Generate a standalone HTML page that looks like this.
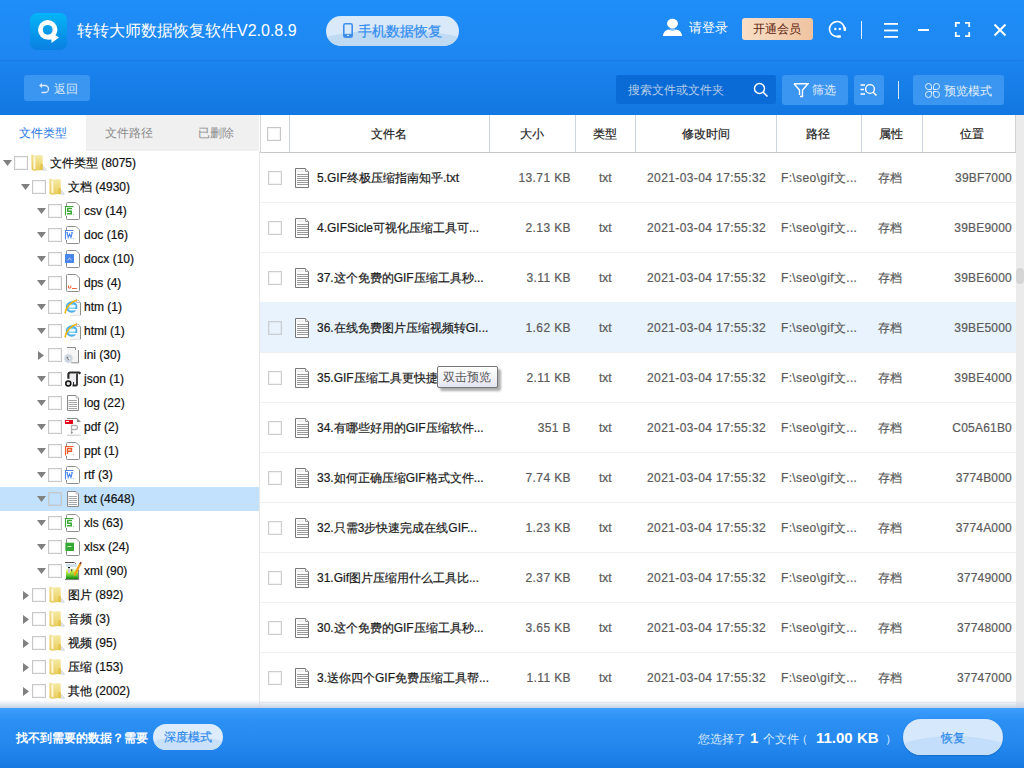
<!DOCTYPE html><html><head><meta charset="utf-8"><style>
*{margin:0;padding:0;box-sizing:border-box}
html,body{width:1024px;height:768px;overflow:hidden;background:#fff;font-family:"Liberation Sans", sans-serif;}
.ab{position:absolute}
.t{position:absolute;white-space:nowrap;line-height:1}
.d{-webkit-text-stroke:0.2px currentColor}
.cb{position:absolute;width:14px;height:14px;border:1px solid #c8c8c8;background:transparent;box-shadow:inset 0 0 1px 1px rgba(0,0,0,0.05)}

</style></head><body>
<div class="ab" style="left:0;top:0;width:1024px;height:60px;background:linear-gradient(#1e8ef9,#1e86f0)"></div>
<div class="ab" style="left:0;top:60px;width:1024px;height:1px;background:#1b7be2"></div>
<div class="ab" style="left:0;top:61px;width:1024px;height:54px;background:linear-gradient(#1c84ef,#1277e0)"></div>
<svg class="ab" style="left:30px;top:13px" width="37" height="37" viewBox="0 0 37 37"><defs><linearGradient id="lg" gradientUnits="userSpaceOnUse" x1="0" y1="0" x2="0" y2="37"><stop offset="0" stop-color="#05b5f6"/><stop offset="1" stop-color="#0a7fe2"/></linearGradient></defs><rect x="0" y="0" width="37" height="37" rx="7" fill="url(#lg)"/><circle cx="17.7" cy="16.8" r="9.7" fill="#fff"/><path d="M17.7 21 L21.3 19.5 L29 24.6 L21.5 30 L21.5 26.5 L17.7 26.5 Z" fill="#fff"/><circle cx="17.7" cy="16.8" r="4.9" fill="url(#lg)"/><path d="M22.5 13.5 A5.5 5.5 0 0 1 22.5 20" fill="none" stroke="#cfd8e0" stroke-width="0.6" opacity="0.6"/></svg>
<div class="t" style="left:77px;top:23px;font-size:16px;color:#fff">转转大师数据恢复软件V2.0.8.9</div>
<div class="ab" style="left:326px;top:16px;width:133px;height:30px;border-radius:15px;background:#d9e9f9;overflow:hidden"><div class="ab" style="left:-25px;top:14px;width:183px;height:44px;border-radius:50%;background:#c1daf4"></div></div>
<svg class="ab" style="left:343px;top:23px" width="10" height="15" viewBox="0 0 10 15"><rect x="0.8" y="0.8" width="8.4" height="13.4" rx="1.5" fill="none" stroke="#3f8fe8" stroke-width="1.6"/><rect x="1" y="11" width="8" height="3" fill="#3f8fe8"/><rect x="4" y="11.8" width="2" height="1.2" fill="#d0e4f8"/></svg>
<div class="t d" style="left:358px;top:24px;font-size:14px;color:#2f8cf0">手机数据恢复</div>
<svg class="ab" style="left:662px;top:18px" width="21" height="19" viewBox="0 0 21 19"><ellipse cx="10.5" cy="5.6" rx="5.5" ry="4.8" fill="#fff"/><rect x="7.8" y="10.6" width="5.4" height="1.1" fill="#fff" opacity=".7"/><path d="M0.8 18 C1.3 14.5 3.5 12.2 6.5 11.6 Q10.5 13.3 14.5 11.6 C17.5 12.2 19.7 14.5 20.2 18 Z" fill="#fff"/></svg>
<div class="t" style="left:689px;top:22px;font-size:12.5px;color:#fff">请登录</div>
<div class="ab" style="left:742px;top:18px;width:71px;height:22px;border-radius:3px;background:linear-gradient(90deg,#f8dfc6,#efc3a0)"></div>
<div class="t" style="left:753px;top:23px;font-size:12px;color:#5e2412">开通会员</div>
<svg class="ab" style="left:828px;top:20px" width="20" height="19" viewBox="0 0 20 19"><path d="M16.5 9 A7.5 7.5 0 1 0 10 16.5" fill="none" stroke="#fff" stroke-width="1.6"/><circle cx="7.3" cy="9" r="1.2" fill="#fff"/><circle cx="11.8" cy="9" r="1.2" fill="#fff"/><rect x="15.5" y="7" width="2.6" height="4" rx="1" fill="#fff"/><rect x="9" y="15.2" width="4" height="2.6" rx="1" fill="#fff"/></svg>
<div class="ab" style="left:861px;top:21px;width:1px;height:18px;background:#e6f0fc"></div>
<svg class="ab" style="left:883px;top:22px" width="16" height="16" viewBox="0 0 16 16"><rect x="1" y="1" width="14" height="1.8" fill="#fff"/><rect x="1" y="7.6" width="14" height="1.8" fill="#fff"/><rect x="1" y="14" width="14" height="1.8" fill="#fff"/></svg>
<div class="ab" style="left:918px;top:29px;width:11px;height:2px;background:#fff"></div>
<svg class="ab" style="left:954px;top:21px" width="17" height="17" viewBox="0 0 17 17"><path d="M1.8 6 V1.8 H6 M11 1.8 H15.2 V6 M15.2 11 V15.2 H11 M6 15.2 H1.8 V11" fill="none" stroke="#fff" stroke-width="1.8"/></svg>
<svg class="ab" style="left:993px;top:23px" width="14" height="14" viewBox="0 0 14 14"><path d="M1.5 1.5 L12.5 12.5 M12.5 1.5 L1.5 12.5" stroke="#fff" stroke-width="2"/></svg>
<div class="ab" style="left:24px;top:75px;width:66px;height:26px;border-radius:3px;background:#3b96f1"></div>
<svg class="ab" style="left:38px;top:82px" width="12" height="12" viewBox="0 0 12 12"><path d="M3 3.5 H7 A3.5 3.5 0 0 1 7 10.5 H3.5" fill="none" stroke="#dbe9fb" stroke-width="1.3"/><path d="M1 3.5 L4 1 L4 6 Z" fill="#dbe9fb"/></svg>
<div class="t" style="left:54px;top:83px;font-size:12px;color:#d4e6fb">返回</div>
<div class="ab" style="left:616px;top:75px;width:160px;height:29px;border-radius:2px;background:#0a6bd6"></div>
<div class="t" style="left:628px;top:84px;font-size:12px;color:#b4cbe8">搜索文件或文件夹</div>
<svg class="ab" style="left:753px;top:82px" width="16" height="16" viewBox="0 0 16 16"><circle cx="6.5" cy="6.5" r="5" fill="none" stroke="#fff" stroke-width="1.5"/><path d="M10 10 L14.5 14.5" stroke="#fff" stroke-width="1.6"/></svg>
<div class="ab" style="left:782px;top:75px;width:66px;height:30px;border-radius:3px;background:#3b96f1"></div>
<svg class="ab" style="left:793px;top:82px" width="16" height="16" viewBox="0 0 16 16"><path d="M1 1.8 H15 L9.5 8 V14.5 L7 14.5" fill="none" stroke="#fff" stroke-width="1.4"/><path d="M1 1.8 L6.5 8 V13" fill="none" stroke="#fff" stroke-width="1.4"/></svg>
<div class="t" style="left:812px;top:84px;font-size:12px;color:#e2eefc">筛选</div>
<div class="ab" style="left:854px;top:75px;width:30px;height:30px;border-radius:3px;background:#3b96f1"></div>
<svg class="ab" style="left:860px;top:83px" width="18" height="14" viewBox="0 0 18 14"><path d="M0.5 2 H5 M0.5 6.5 H4 M0.5 11 H5" stroke="#fff" stroke-width="1.3"/><circle cx="10" cy="6" r="4.4" fill="none" stroke="#fff" stroke-width="1.4"/><path d="M13 9 L16.5 12.5" stroke="#fff" stroke-width="1.5"/></svg>
<div class="ab" style="left:898px;top:81px;width:1px;height:18px;background:#d8e8fb"></div>
<div class="ab" style="left:913px;top:75px;width:91px;height:30px;border-radius:3px;background:#3b96f1"></div>
<svg class="ab" style="left:924px;top:82px" width="17" height="17" viewBox="0 0 17 17"><g fill="none" stroke="#e4f0fd" stroke-width="1"><path d="M7.5 7.5 V4.5 A3 3 0 1 0 4.5 7.5 Z"/><path d="M9.5 7.5 V4.5 A3 3 0 1 1 12.5 7.5 Z"/><path d="M7.5 9.5 V12.5 A3 3 0 1 1 4.5 9.5 Z"/><path d="M9.5 9.5 V12.5 A3 3 0 1 0 12.5 9.5 Z"/></g></svg>
<div class="t" style="left:944px;top:85px;font-size:12px;color:#e2eefc">预览模式</div>
<div class="ab" style="left:86px;top:115px;width:173px;height:36px;background:#f0f0f0"></div>
<div class="t" style="left:19px;top:127px;font-size:12px;color:#1f78e6">文件类型</div>
<div class="t" style="left:105px;top:127px;font-size:12px;color:#8c8c8c">文件路径</div>
<div class="t" style="left:198px;top:127px;font-size:12px;color:#8c8c8c">已删除</div>
<div class="ab" style="left:259px;top:151px;width:1px;height:557px;background:#e6e6e6"></div>
<svg class="ab" style="left:3px;top:160px" width="9" height="6" viewBox="0 0 9 6"><path d="M0 0 H9 L4.5 6 Z" fill="#808080"/></svg>
<div class="cb" style="left:14px;top:156px"></div>
<svg class="ab" style="left:31px;top:154px" width="17" height="18" viewBox="0 0 17 18"><defs><linearGradient id="fb" x1="0" y1="0" x2="0" y2="1"><stop offset="0" stop-color="#f6eaa8"/><stop offset="1" stop-color="#e8cc58"/></linearGradient><linearGradient id="fl" x1="0" y1="0" x2="0" y2="1"><stop offset="0" stop-color="#f4e39a"/><stop offset="1" stop-color="#e6c650"/></linearGradient></defs><path d="M11.7 11 L16.5 16.5 L11.7 17 Z" fill="#cdd5df" opacity=".75"/><path d="M4.8 1.6 Q8 0.6 11.7 1.6 V16 L4.8 16.6 Z" fill="url(#fb)"/><path d="M9.6 10 H11.7 V16 L9.6 16.2 Z" fill="#e2c244"/><path d="M0.2 0.3 L4.8 2.2 V17 L0.6 16 Z" fill="url(#fl)"/><path d="M2.4 2.4 L4.3 3.2 V15.5 L2.4 15 Z" fill="#fff9dc"/></svg>
<div class="t d" style="left:50px;top:157px;font-size:12px;color:#111">文件类型 (8075)</div>
<svg class="ab" style="left:21px;top:184px" width="9" height="6" viewBox="0 0 9 6"><path d="M0 0 H9 L4.5 6 Z" fill="#808080"/></svg>
<div class="cb" style="left:32px;top:180px"></div>
<svg class="ab" style="left:49px;top:178px" width="17" height="18" viewBox="0 0 17 18"><defs><linearGradient id="fb" x1="0" y1="0" x2="0" y2="1"><stop offset="0" stop-color="#f6eaa8"/><stop offset="1" stop-color="#e8cc58"/></linearGradient><linearGradient id="fl" x1="0" y1="0" x2="0" y2="1"><stop offset="0" stop-color="#f4e39a"/><stop offset="1" stop-color="#e6c650"/></linearGradient></defs><path d="M11.7 11 L16.5 16.5 L11.7 17 Z" fill="#cdd5df" opacity=".75"/><path d="M4.8 1.6 Q8 0.6 11.7 1.6 V16 L4.8 16.6 Z" fill="url(#fb)"/><path d="M9.6 10 H11.7 V16 L9.6 16.2 Z" fill="#e2c244"/><path d="M0.2 0.3 L4.8 2.2 V17 L0.6 16 Z" fill="url(#fl)"/><path d="M2.4 2.4 L4.3 3.2 V15.5 L2.4 15 Z" fill="#fff9dc"/></svg>
<div class="t d" style="left:68px;top:181px;font-size:12px;color:#111">文档 (4930)</div>
<svg class="ab" style="left:37px;top:208px" width="9" height="6" viewBox="0 0 9 6"><path d="M0 0 H9 L4.5 6 Z" fill="#808080"/></svg>
<div class="cb" style="left:48px;top:204px"></div>
<svg class="ab" style="left:63px;top:201px" width="20" height="20" viewBox="0 0 20 20"><path d="M3.5 2.5 Q3.5 1.5 4.5 1.5 H13 L16.5 5 V17.5 Q16.5 18.5 15.5 18.5 H4.5 Q3.5 18.5 3.5 17.5 Z" fill="#fff" stroke="#8e8e8e" stroke-width="1"/><path d="M13 1.5 L16.5 5" stroke="#c8c8c8" stroke-width="1"/><rect x="2" y="5" width="9" height="10" fill="#fff"/><path d="M2.5 14.5 V5.5 H10.5" fill="none" stroke="#39a935" stroke-width="1.1"/><rect x="10" y="13" width="1" height="1" fill="#39a935" opacity=".6"/><path d="M9 7.5 H4.7 V10.2 H8.3 V12.7 H4" fill="none" stroke="#39a935" stroke-width="1.4"/></svg>
<div class="t d" style="left:84px;top:205px;font-size:12px;color:#111">csv (14)</div>
<svg class="ab" style="left:37px;top:232px" width="9" height="6" viewBox="0 0 9 6"><path d="M0 0 H9 L4.5 6 Z" fill="#808080"/></svg>
<div class="cb" style="left:48px;top:228px"></div>
<svg class="ab" style="left:63px;top:225px" width="20" height="20" viewBox="0 0 20 20"><path d="M3.5 2.5 Q3.5 1.5 4.5 1.5 H13 L16.5 5 V17.5 Q16.5 18.5 15.5 18.5 H4.5 Q3.5 18.5 3.5 17.5 Z" fill="#fff" stroke="#8e8e8e" stroke-width="1"/><path d="M13 1.5 L16.5 5" stroke="#c8c8c8" stroke-width="1"/><rect x="2" y="5" width="9" height="10" fill="#fff"/><path d="M2.5 14.5 V5.5 H10.5" fill="none" stroke="#4a86e8" stroke-width="1.1"/><rect x="10" y="13" width="1" height="1" fill="#4a86e8" opacity=".6"/><path d="M4 7.5 L5.2 12.5 L6.6 9 L8 12.5 L9.2 7.5" fill="none" stroke="#4a86e8" stroke-width="1.1"/><path d="M3.5 7.5 H5 M8.3 7.5 H9.8" stroke="#4a86e8" stroke-width="1"/></svg>
<div class="t d" style="left:84px;top:229px;font-size:12px;color:#111">doc (16)</div>
<svg class="ab" style="left:37px;top:256px" width="9" height="6" viewBox="0 0 9 6"><path d="M0 0 H9 L4.5 6 Z" fill="#808080"/></svg>
<div class="cb" style="left:48px;top:252px"></div>
<svg class="ab" style="left:63px;top:249px" width="20" height="20" viewBox="0 0 20 20"><path d="M3.5 2.5 Q3.5 1.5 4.5 1.5 H13 L16.5 5 V17.5 Q16.5 18.5 15.5 18.5 H4.5 Q3.5 18.5 3.5 17.5 Z" fill="#fff" stroke="#8e8e8e" stroke-width="1"/><path d="M13 1.5 L16.5 5" stroke="#c8c8c8" stroke-width="1"/><rect x="2" y="5" width="9" height="9" fill="#4a86e8"/><path d="M4.5 11 L6.5 9.3 L8.5 11" fill="none" stroke="#d6e4fb" stroke-width="1"/></svg>
<div class="t d" style="left:84px;top:253px;font-size:12px;color:#111">docx (10)</div>
<svg class="ab" style="left:37px;top:280px" width="9" height="6" viewBox="0 0 9 6"><path d="M0 0 H9 L4.5 6 Z" fill="#808080"/></svg>
<div class="cb" style="left:48px;top:276px"></div>
<svg class="ab" style="left:63px;top:273px" width="20" height="20" viewBox="0 0 20 20"><path d="M3.5 2.5 Q3.5 1.5 4.5 1.5 H13 L16.5 5 V17.5 Q16.5 18.5 15.5 18.5 H4.5 Q3.5 18.5 3.5 17.5 Z" fill="#fff" stroke="#8e8e8e" stroke-width="1"/><path d="M13 1.5 L16.5 5" stroke="#c8c8c8" stroke-width="1"/><path d="M5.5 12.5 V15 H7.8 V12.5" fill="none" stroke="#f0643a" stroke-width="1"/><path d="M9 15.5 H13.8" stroke="#f0643a" stroke-width="1"/></svg>
<div class="t d" style="left:84px;top:277px;font-size:12px;color:#111">dps (4)</div>
<svg class="ab" style="left:37px;top:304px" width="9" height="6" viewBox="0 0 9 6"><path d="M0 0 H9 L4.5 6 Z" fill="#808080"/></svg>
<div class="cb" style="left:48px;top:300px"></div>
<svg class="ab" style="left:63px;top:297px" width="20" height="20" viewBox="0 0 20 20"><rect x="8" y="2.5" width="9" height="16" fill="#f6f6f6"/><path d="M14 2.5 L17.5 6 V18.5" fill="none" stroke="#8e8e8e" stroke-width="1"/><path d="M13.5 2.5 V5.5 H17" fill="#fff" stroke="#aaa" stroke-width="0.8"/><path d="M7 18.5 H17.5" stroke="#e6e6e6" stroke-width="1"/><circle cx="8.6" cy="10" r="5.8" fill="#4cb0ea"/><circle cx="8.6" cy="10" r="3.6" fill="#8fd6f6"/><rect x="6.5" y="8.3" width="6" height="2" fill="#fff"/><rect x="6.5" y="12" width="9" height="1.4" fill="#fff"/><path d="M2 16.5 C2.8 10.5 8 4.5 14 3" fill="none" stroke="#f5b400" stroke-width="1.5"/></svg>
<div class="t d" style="left:84px;top:301px;font-size:12px;color:#111">htm (1)</div>
<svg class="ab" style="left:37px;top:328px" width="9" height="6" viewBox="0 0 9 6"><path d="M0 0 H9 L4.5 6 Z" fill="#808080"/></svg>
<div class="cb" style="left:48px;top:324px"></div>
<svg class="ab" style="left:63px;top:321px" width="20" height="20" viewBox="0 0 20 20"><rect x="8" y="2.5" width="9" height="16" fill="#f6f6f6"/><path d="M14 2.5 L17.5 6 V18.5" fill="none" stroke="#8e8e8e" stroke-width="1"/><path d="M13.5 2.5 V5.5 H17" fill="#fff" stroke="#aaa" stroke-width="0.8"/><path d="M7 18.5 H17.5" stroke="#e6e6e6" stroke-width="1"/><circle cx="8.6" cy="10" r="5.8" fill="#4cb0ea"/><circle cx="8.6" cy="10" r="3.6" fill="#8fd6f6"/><rect x="6.5" y="8.3" width="6" height="2" fill="#fff"/><rect x="6.5" y="12" width="9" height="1.4" fill="#fff"/><path d="M2 16.5 C2.8 10.5 8 4.5 14 3" fill="none" stroke="#f5b400" stroke-width="1.5"/></svg>
<div class="t d" style="left:84px;top:325px;font-size:12px;color:#111">html (1)</div>
<svg class="ab" style="left:38px;top:351px" width="6" height="9" viewBox="0 0 6 9"><path d="M0 0 V9 L6 4.5 Z" fill="#808080"/></svg>
<div class="cb" style="left:48px;top:348px"></div>
<svg class="ab" style="left:63px;top:345px" width="20" height="20" viewBox="0 0 20 20"><path d="M4.5 2.5 H12.5 L15.5 5.5 V17.5 H4.5 Z" fill="#f5f5f5"/><path d="M4 2.5 H12.5 V5 M15.5 5 V17.8 H8" fill="none" stroke="#8c8c8c" stroke-width="1"/><circle cx="5.5" cy="13.5" r="4.2" fill="#c9d3dd"/><circle cx="5.5" cy="13.5" r="4.2" fill="none" stroke="#dde4ea" stroke-width="1.4" stroke-dasharray="1.6 1.4"/><path d="M4 12 L6 15" stroke="#6a6a6a" stroke-width="1.2"/><circle cx="6.3" cy="13.5" r="0.9" fill="#fff"/></svg>
<div class="t d" style="left:84px;top:349px;font-size:12px;color:#111">ini (30)</div>
<svg class="ab" style="left:37px;top:376px" width="9" height="6" viewBox="0 0 9 6"><path d="M0 0 H9 L4.5 6 Z" fill="#808080"/></svg>
<div class="cb" style="left:48px;top:372px"></div>
<svg class="ab" style="left:63px;top:369px" width="20" height="20" viewBox="0 0 20 20"><rect x="7" y="4.7" width="6.5" height="11.5" fill="#eeeef0"/><path d="M5.4 9.7 V5.5 Q5.4 3.5 7.5 3.5 H16 L17.5 4.6" fill="none" stroke="#2a2a2a" stroke-width="2.2"/><path d="M14 4.5 V15.5 Q14 16.5 13 16.5 H9.5" fill="none" stroke="#2a2a2a" stroke-width="1.8"/><path d="M10.5 13 V16" stroke="#2a2a2a" stroke-width="1"/><circle cx="5.3" cy="14.5" r="2.5" fill="#e0e0e0" stroke="#111" stroke-width="1.5"/></svg>
<div class="t d" style="left:84px;top:373px;font-size:12px;color:#111">json (1)</div>
<svg class="ab" style="left:37px;top:400px" width="9" height="6" viewBox="0 0 9 6"><path d="M0 0 H9 L4.5 6 Z" fill="#808080"/></svg>
<div class="cb" style="left:48px;top:396px"></div>
<svg class="ab" style="left:63px;top:393px" width="20" height="20" viewBox="0 0 20 20"><path d="M4.5 2.5 H13 L15.5 5 V17.5 H4.5 Z" fill="#fff" stroke="#8a8a8a" stroke-width="1"/><path d="M13 2.5 V5 H15.5" fill="#eee" stroke="#b0b0b0" stroke-width="0.8"/><path d="M5.5 7.5 H14 M5.5 9.5 H14 M5.5 11.5 H14 M5.5 13.5 H14 M5.5 15.5 H14" stroke="#a6a6a6" stroke-width="1"/></svg>
<div class="t d" style="left:84px;top:397px;font-size:12px;color:#111">log (22)</div>
<svg class="ab" style="left:37px;top:424px" width="9" height="6" viewBox="0 0 9 6"><path d="M0 0 H9 L4.5 6 Z" fill="#808080"/></svg>
<div class="cb" style="left:48px;top:420px"></div>
<svg class="ab" style="left:63px;top:417px" width="20" height="20" viewBox="0 0 20 20"><path d="M4 1.5 H14" stroke="#8c8c8c" stroke-width="1"/><path d="M14 1 L18 5 H14 Z" fill="#8a8a8a"/><path d="M4 18.2 H18" stroke="#c8c8c8" stroke-width="1"/><rect x="2" y="3" width="8" height="4" fill="#e3061a"/><rect x="3" y="4" width="3" height="1" fill="#fff"/><path d="M8.5 17 V8.5 H12.5 Q14.5 8.5 14.5 10.5 Q14.5 12.5 12.5 12.5 H8.5" fill="none" stroke="#b4b4b4" stroke-width="1.3"/><circle cx="9" cy="15.5" r="0.8" fill="#888"/></svg>
<div class="t d" style="left:84px;top:421px;font-size:12px;color:#111">pdf (2)</div>
<svg class="ab" style="left:37px;top:448px" width="9" height="6" viewBox="0 0 9 6"><path d="M0 0 H9 L4.5 6 Z" fill="#808080"/></svg>
<div class="cb" style="left:48px;top:444px"></div>
<svg class="ab" style="left:63px;top:441px" width="20" height="20" viewBox="0 0 20 20"><path d="M3.5 2.5 Q3.5 1.5 4.5 1.5 H13 L16.5 5 V17.5 Q16.5 18.5 15.5 18.5 H4.5 Q3.5 18.5 3.5 17.5 Z" fill="#fff" stroke="#8e8e8e" stroke-width="1"/><path d="M13 1.5 L16.5 5" stroke="#c8c8c8" stroke-width="1"/><rect x="2" y="5" width="9" height="10" fill="#fff"/><path d="M2.5 14.5 V5.5 H10.5" fill="none" stroke="#f05a24" stroke-width="1.1"/><rect x="10" y="13" width="1" height="1" fill="#f05a24" opacity=".6"/><path d="M4.5 13 V7.5 H8.5 V10.3 H4.5" fill="none" stroke="#f05a24" stroke-width="1.4"/></svg>
<div class="t d" style="left:84px;top:445px;font-size:12px;color:#111">ppt (1)</div>
<svg class="ab" style="left:37px;top:472px" width="9" height="6" viewBox="0 0 9 6"><path d="M0 0 H9 L4.5 6 Z" fill="#808080"/></svg>
<div class="cb" style="left:48px;top:468px"></div>
<svg class="ab" style="left:63px;top:465px" width="20" height="20" viewBox="0 0 20 20"><path d="M3.5 2.5 Q3.5 1.5 4.5 1.5 H13 L16.5 5 V17.5 Q16.5 18.5 15.5 18.5 H4.5 Q3.5 18.5 3.5 17.5 Z" fill="#fff" stroke="#8e8e8e" stroke-width="1"/><path d="M13 1.5 L16.5 5" stroke="#c8c8c8" stroke-width="1"/><rect x="2" y="5" width="9" height="10" fill="#fff"/><path d="M2.5 14.5 V5.5 H10.5" fill="none" stroke="#4a86e8" stroke-width="1.1"/><rect x="10" y="13" width="1" height="1" fill="#4a86e8" opacity=".6"/><path d="M4 7.5 L5.2 12.5 L6.6 9 L8 12.5 L9.2 7.5" fill="none" stroke="#4a86e8" stroke-width="1.1"/><path d="M3.5 7.5 H5 M8.3 7.5 H9.8" stroke="#4a86e8" stroke-width="1"/></svg>
<div class="t d" style="left:84px;top:469px;font-size:12px;color:#111">rtf (3)</div>
<div class="ab" style="left:0;top:487px;width:259px;height:24px;background:#c2e1fc"></div>
<svg class="ab" style="left:37px;top:496px" width="9" height="6" viewBox="0 0 9 6"><path d="M0 0 H9 L4.5 6 Z" fill="#808080"/></svg>
<div class="cb" style="left:48px;top:492px"></div>
<svg class="ab" style="left:63px;top:489px" width="20" height="20" viewBox="0 0 20 20"><path d="M4.5 2.5 H13 L15.5 5 V17.5 H4.5 Z" fill="#fff" stroke="#8a8a8a" stroke-width="1"/><path d="M13 2.5 V5 H15.5" fill="#eee" stroke="#b0b0b0" stroke-width="0.8"/><path d="M5.5 7.5 H14 M5.5 9.5 H14 M5.5 11.5 H14 M5.5 13.5 H14 M5.5 15.5 H14" stroke="#a6a6a6" stroke-width="1"/></svg>
<div class="t d" style="left:84px;top:493px;font-size:12px;color:#111">txt (4648)</div>
<svg class="ab" style="left:37px;top:520px" width="9" height="6" viewBox="0 0 9 6"><path d="M0 0 H9 L4.5 6 Z" fill="#808080"/></svg>
<div class="cb" style="left:48px;top:516px"></div>
<svg class="ab" style="left:63px;top:513px" width="20" height="20" viewBox="0 0 20 20"><path d="M3.5 2.5 Q3.5 1.5 4.5 1.5 H13 L16.5 5 V17.5 Q16.5 18.5 15.5 18.5 H4.5 Q3.5 18.5 3.5 17.5 Z" fill="#fff" stroke="#8e8e8e" stroke-width="1"/><path d="M13 1.5 L16.5 5" stroke="#c8c8c8" stroke-width="1"/><rect x="2" y="5" width="9" height="10" fill="#fff"/><path d="M2.5 14.5 V5.5 H10.5" fill="none" stroke="#39a935" stroke-width="1.1"/><rect x="10" y="13" width="1" height="1" fill="#39a935" opacity=".6"/><path d="M9 7.5 H4.7 V10.2 H8.3 V12.7 H4" fill="none" stroke="#39a935" stroke-width="1.4"/></svg>
<div class="t d" style="left:84px;top:517px;font-size:12px;color:#111">xls (63)</div>
<svg class="ab" style="left:37px;top:544px" width="9" height="6" viewBox="0 0 9 6"><path d="M0 0 H9 L4.5 6 Z" fill="#808080"/></svg>
<div class="cb" style="left:48px;top:540px"></div>
<svg class="ab" style="left:63px;top:537px" width="20" height="20" viewBox="0 0 20 20"><path d="M3.5 2.5 Q3.5 1.5 4.5 1.5 H13 L16.5 5 V17.5 Q16.5 18.5 15.5 18.5 H4.5 Q3.5 18.5 3.5 17.5 Z" fill="#fff" stroke="#8e8e8e" stroke-width="1"/><path d="M13 1.5 L16.5 5" stroke="#c8c8c8" stroke-width="1"/><rect x="2.4" y="5.7" width="8.6" height="8.3" fill="#35a835"/><path d="M4.5 9.5 H8.5" stroke="#c8ecc8" stroke-width="1"/></svg>
<div class="t d" style="left:84px;top:541px;font-size:12px;color:#111">xlsx (24)</div>
<svg class="ab" style="left:37px;top:568px" width="9" height="6" viewBox="0 0 9 6"><path d="M0 0 H9 L4.5 6 Z" fill="#808080"/></svg>
<div class="cb" style="left:48px;top:564px"></div>
<svg class="ab" style="left:63px;top:561px" width="20" height="20" viewBox="0 0 20 20"><defs><linearGradient id="xg" x1="0" y1="0" x2="0" y2="1"><stop offset="0" stop-color="#f2f9e6"/><stop offset="0.3" stop-color="#ccf048"/><stop offset="0.7" stop-color="#58c030"/><stop offset="1" stop-color="#0a880a"/></linearGradient></defs><path d="M2 1.5 H11.6" stroke="#555" stroke-width="1"/><rect x="12" y="2" width="1" height="2" fill="#777"/><rect x="3" y="3" width="11" height="3" fill="#d2e2ec"/><rect x="3" y="7.5" width="12" height="10.6" fill="url(#xg)"/><path d="M15.6 9 V18.6 H2" fill="none" stroke="#777" stroke-width="1"/><rect x="5" y="6" width="2" height="1.2" fill="#111"/><rect x="5" y="8" width="2" height="4" fill="#d0c8e8"/><rect x="8.4" y="8" width="0.8" height="2.5" fill="#111"/><path d="M11.3 14.5 L17.3 2.8" stroke="#f0a010" stroke-width="2.2"/><path d="M17 3.2 L18.2 1.2" stroke="#8a3030" stroke-width="1.6"/></svg>
<div class="t d" style="left:84px;top:565px;font-size:12px;color:#111">xml (90)</div>
<svg class="ab" style="left:23px;top:591px" width="6" height="9" viewBox="0 0 6 9"><path d="M0 0 V9 L6 4.5 Z" fill="#808080"/></svg>
<div class="cb" style="left:32px;top:588px"></div>
<svg class="ab" style="left:49px;top:586px" width="17" height="18" viewBox="0 0 17 18"><defs><linearGradient id="fb" x1="0" y1="0" x2="0" y2="1"><stop offset="0" stop-color="#f6eaa8"/><stop offset="1" stop-color="#e8cc58"/></linearGradient><linearGradient id="fl" x1="0" y1="0" x2="0" y2="1"><stop offset="0" stop-color="#f4e39a"/><stop offset="1" stop-color="#e6c650"/></linearGradient></defs><path d="M11.7 11 L16.5 16.5 L11.7 17 Z" fill="#cdd5df" opacity=".75"/><path d="M4.8 1.6 Q8 0.6 11.7 1.6 V16 L4.8 16.6 Z" fill="url(#fb)"/><path d="M9.6 10 H11.7 V16 L9.6 16.2 Z" fill="#e2c244"/><path d="M0.2 0.3 L4.8 2.2 V17 L0.6 16 Z" fill="url(#fl)"/><path d="M2.4 2.4 L4.3 3.2 V15.5 L2.4 15 Z" fill="#fff9dc"/></svg>
<div class="t d" style="left:68px;top:589px;font-size:12px;color:#111">图片 (892)</div>
<svg class="ab" style="left:23px;top:615px" width="6" height="9" viewBox="0 0 6 9"><path d="M0 0 V9 L6 4.5 Z" fill="#808080"/></svg>
<div class="cb" style="left:32px;top:612px"></div>
<svg class="ab" style="left:49px;top:610px" width="17" height="18" viewBox="0 0 17 18"><defs><linearGradient id="fb" x1="0" y1="0" x2="0" y2="1"><stop offset="0" stop-color="#f6eaa8"/><stop offset="1" stop-color="#e8cc58"/></linearGradient><linearGradient id="fl" x1="0" y1="0" x2="0" y2="1"><stop offset="0" stop-color="#f4e39a"/><stop offset="1" stop-color="#e6c650"/></linearGradient></defs><path d="M11.7 11 L16.5 16.5 L11.7 17 Z" fill="#cdd5df" opacity=".75"/><path d="M4.8 1.6 Q8 0.6 11.7 1.6 V16 L4.8 16.6 Z" fill="url(#fb)"/><path d="M9.6 10 H11.7 V16 L9.6 16.2 Z" fill="#e2c244"/><path d="M0.2 0.3 L4.8 2.2 V17 L0.6 16 Z" fill="url(#fl)"/><path d="M2.4 2.4 L4.3 3.2 V15.5 L2.4 15 Z" fill="#fff9dc"/></svg>
<div class="t d" style="left:68px;top:613px;font-size:12px;color:#111">音频 (3)</div>
<svg class="ab" style="left:23px;top:639px" width="6" height="9" viewBox="0 0 6 9"><path d="M0 0 V9 L6 4.5 Z" fill="#808080"/></svg>
<div class="cb" style="left:32px;top:636px"></div>
<svg class="ab" style="left:49px;top:634px" width="17" height="18" viewBox="0 0 17 18"><defs><linearGradient id="fb" x1="0" y1="0" x2="0" y2="1"><stop offset="0" stop-color="#f6eaa8"/><stop offset="1" stop-color="#e8cc58"/></linearGradient><linearGradient id="fl" x1="0" y1="0" x2="0" y2="1"><stop offset="0" stop-color="#f4e39a"/><stop offset="1" stop-color="#e6c650"/></linearGradient></defs><path d="M11.7 11 L16.5 16.5 L11.7 17 Z" fill="#cdd5df" opacity=".75"/><path d="M4.8 1.6 Q8 0.6 11.7 1.6 V16 L4.8 16.6 Z" fill="url(#fb)"/><path d="M9.6 10 H11.7 V16 L9.6 16.2 Z" fill="#e2c244"/><path d="M0.2 0.3 L4.8 2.2 V17 L0.6 16 Z" fill="url(#fl)"/><path d="M2.4 2.4 L4.3 3.2 V15.5 L2.4 15 Z" fill="#fff9dc"/></svg>
<div class="t d" style="left:68px;top:637px;font-size:12px;color:#111">视频 (95)</div>
<svg class="ab" style="left:23px;top:663px" width="6" height="9" viewBox="0 0 6 9"><path d="M0 0 V9 L6 4.5 Z" fill="#808080"/></svg>
<div class="cb" style="left:32px;top:660px"></div>
<svg class="ab" style="left:49px;top:658px" width="17" height="18" viewBox="0 0 17 18"><defs><linearGradient id="fb" x1="0" y1="0" x2="0" y2="1"><stop offset="0" stop-color="#f6eaa8"/><stop offset="1" stop-color="#e8cc58"/></linearGradient><linearGradient id="fl" x1="0" y1="0" x2="0" y2="1"><stop offset="0" stop-color="#f4e39a"/><stop offset="1" stop-color="#e6c650"/></linearGradient></defs><path d="M11.7 11 L16.5 16.5 L11.7 17 Z" fill="#cdd5df" opacity=".75"/><path d="M4.8 1.6 Q8 0.6 11.7 1.6 V16 L4.8 16.6 Z" fill="url(#fb)"/><path d="M9.6 10 H11.7 V16 L9.6 16.2 Z" fill="#e2c244"/><path d="M0.2 0.3 L4.8 2.2 V17 L0.6 16 Z" fill="url(#fl)"/><path d="M2.4 2.4 L4.3 3.2 V15.5 L2.4 15 Z" fill="#fff9dc"/></svg>
<div class="t d" style="left:68px;top:661px;font-size:12px;color:#111">压缩 (153)</div>
<svg class="ab" style="left:23px;top:687px" width="6" height="9" viewBox="0 0 6 9"><path d="M0 0 V9 L6 4.5 Z" fill="#808080"/></svg>
<div class="cb" style="left:32px;top:684px"></div>
<svg class="ab" style="left:49px;top:682px" width="17" height="18" viewBox="0 0 17 18"><defs><linearGradient id="fb" x1="0" y1="0" x2="0" y2="1"><stop offset="0" stop-color="#f6eaa8"/><stop offset="1" stop-color="#e8cc58"/></linearGradient><linearGradient id="fl" x1="0" y1="0" x2="0" y2="1"><stop offset="0" stop-color="#f4e39a"/><stop offset="1" stop-color="#e6c650"/></linearGradient></defs><path d="M11.7 11 L16.5 16.5 L11.7 17 Z" fill="#cdd5df" opacity=".75"/><path d="M4.8 1.6 Q8 0.6 11.7 1.6 V16 L4.8 16.6 Z" fill="url(#fb)"/><path d="M9.6 10 H11.7 V16 L9.6 16.2 Z" fill="#e2c244"/><path d="M0.2 0.3 L4.8 2.2 V17 L0.6 16 Z" fill="url(#fl)"/><path d="M2.4 2.4 L4.3 3.2 V15.5 L2.4 15 Z" fill="#fff9dc"/></svg>
<div class="t d" style="left:68px;top:685px;font-size:12px;color:#111">其他 (2002)</div>
<div class="ab" style="left:260px;top:115px;width:756px;height:38px;border-left:1px solid #d6d6d6;border-right:1px solid #d0d0d0;border-bottom:1px solid #c9c9c9"></div>
<div class="ab" style="left:289px;top:115px;width:1px;height:37px;background:#cdd6e0"></div>
<div class="ab" style="left:489px;top:115px;width:1px;height:37px;background:#cdd6e0"></div>
<div class="ab" style="left:575px;top:115px;width:1px;height:37px;background:#cdd6e0"></div>
<div class="ab" style="left:635px;top:115px;width:1px;height:37px;background:#cdd6e0"></div>
<div class="ab" style="left:776px;top:115px;width:1px;height:37px;background:#cdd6e0"></div>
<div class="ab" style="left:861px;top:115px;width:1px;height:37px;background:#cdd6e0"></div>
<div class="ab" style="left:922px;top:115px;width:1px;height:37px;background:#cdd6e0"></div>
<div class="cb" style="left:267px;top:127px"></div>
<div class="t d" style="left:389px;top:128px;width:0;font-size:12px;color:#222"><span style="position:absolute;left:0;transform:translateX(-50%)">文件名</span></div>
<div class="t d" style="left:532px;top:128px;width:0;font-size:12px;color:#222"><span style="position:absolute;left:0;transform:translateX(-50%)">大小</span></div>
<div class="t d" style="left:605px;top:128px;width:0;font-size:12px;color:#222"><span style="position:absolute;left:0;transform:translateX(-50%)">类型</span></div>
<div class="t d" style="left:706px;top:128px;width:0;font-size:12px;color:#222"><span style="position:absolute;left:0;transform:translateX(-50%)">修改时间</span></div>
<div class="t d" style="left:818px;top:128px;width:0;font-size:12px;color:#222"><span style="position:absolute;left:0;transform:translateX(-50%)">路径</span></div>
<div class="t d" style="left:891px;top:128px;width:0;font-size:12px;color:#222"><span style="position:absolute;left:0;transform:translateX(-50%)">属性</span></div>
<div class="t d" style="left:972px;top:128px;width:0;font-size:12px;color:#222"><span style="position:absolute;left:0;transform:translateX(-50%)">位置</span></div>
<div class="ab" style="left:1016px;top:115px;width:8px;height:593px;background:#ebebeb"></div>
<div class="ab" style="left:1016px;top:268px;width:8px;height:16px;border-radius:4px;background:#d6d6d6"></div>
<div class="ab" style="left:260px;top:202px;width:756px;height:1px;background:#efefef"></div>
<div class="cb" style="left:268px;top:171px;border-color:#cdcdcd"></div>
<svg class="ab" style="left:295px;top:168px" width="14" height="20" viewBox="0 0 14 20"><path d="M0.5 0.5 H10.5 L13.5 3.5 V19.5 H0.5 Z" fill="#fff" stroke="#777" stroke-width="1"/><rect x="2" y="2" width="7" height="2" fill="#f0f0f0"/><path d="M10.5 0.5 V3.5 H13.5" fill="#f2f2f2" stroke="#999" stroke-width="1"/><path d="M2 6.5 H13 M2 8.5 H13 M2 10.5 H13 M2 12.5 H13 M2 14.5 H13 M2 16.5 H13" stroke="#9a9a9a" stroke-width="1"/></svg>
<div class="t d" style="left:317px;top:172px;font-size:12px;color:#1a1a1a">5.GIF终极压缩指南知乎.txt</div>
<div class="t d" style="left:0;top:172px;width:571px;text-align:right;font-size:12px;letter-spacing:0.4px;color:#5a5a5a">13.71 KB</div>
<div class="t d" style="left:599px;top:172px;font-size:12px;color:#5a5a5a">txt</div>
<div class="t d" style="left:647px;top:172px;font-size:12px;letter-spacing:0.4px;color:#5a5a5a">2021-03-04 17:55:32</div>
<div class="t d" style="left:781px;top:172px;font-size:12px;letter-spacing:0.35px;color:#5a5a5a">F:\seo\gif文...</div>
<div class="t d" style="left:878px;top:172px;font-size:12px;color:#5a5a5a">存档</div>
<div class="t d" style="left:0;top:172px;width:1012px;text-align:right;font-size:12px;letter-spacing:0.2px;color:#5a5a5a">39BF7000</div>
<div class="ab" style="left:260px;top:252px;width:756px;height:1px;background:#efefef"></div>
<div class="cb" style="left:268px;top:221px;border-color:#cdcdcd"></div>
<svg class="ab" style="left:295px;top:218px" width="14" height="20" viewBox="0 0 14 20"><path d="M0.5 0.5 H10.5 L13.5 3.5 V19.5 H0.5 Z" fill="#fff" stroke="#777" stroke-width="1"/><rect x="2" y="2" width="7" height="2" fill="#f0f0f0"/><path d="M10.5 0.5 V3.5 H13.5" fill="#f2f2f2" stroke="#999" stroke-width="1"/><path d="M2 6.5 H13 M2 8.5 H13 M2 10.5 H13 M2 12.5 H13 M2 14.5 H13 M2 16.5 H13" stroke="#9a9a9a" stroke-width="1"/></svg>
<div class="t d" style="left:317px;top:222px;font-size:12px;color:#1a1a1a">4.GIFSicle可视化压缩工具可...</div>
<div class="t d" style="left:0;top:222px;width:571px;text-align:right;font-size:12px;letter-spacing:0.4px;color:#5a5a5a">2.13 KB</div>
<div class="t d" style="left:599px;top:222px;font-size:12px;color:#5a5a5a">txt</div>
<div class="t d" style="left:647px;top:222px;font-size:12px;letter-spacing:0.4px;color:#5a5a5a">2021-03-04 17:55:32</div>
<div class="t d" style="left:781px;top:222px;font-size:12px;letter-spacing:0.35px;color:#5a5a5a">F:\seo\gif文...</div>
<div class="t d" style="left:878px;top:222px;font-size:12px;color:#5a5a5a">存档</div>
<div class="t d" style="left:0;top:222px;width:1012px;text-align:right;font-size:12px;letter-spacing:0.2px;color:#5a5a5a">39BE9000</div>
<div class="ab" style="left:260px;top:302px;width:756px;height:1px;background:#efefef"></div>
<div class="cb" style="left:268px;top:271px;border-color:#cdcdcd"></div>
<svg class="ab" style="left:295px;top:268px" width="14" height="20" viewBox="0 0 14 20"><path d="M0.5 0.5 H10.5 L13.5 3.5 V19.5 H0.5 Z" fill="#fff" stroke="#777" stroke-width="1"/><rect x="2" y="2" width="7" height="2" fill="#f0f0f0"/><path d="M10.5 0.5 V3.5 H13.5" fill="#f2f2f2" stroke="#999" stroke-width="1"/><path d="M2 6.5 H13 M2 8.5 H13 M2 10.5 H13 M2 12.5 H13 M2 14.5 H13 M2 16.5 H13" stroke="#9a9a9a" stroke-width="1"/></svg>
<div class="t d" style="left:317px;top:272px;font-size:12px;color:#1a1a1a">37.这个免费的GIF压缩工具秒...</div>
<div class="t d" style="left:0;top:272px;width:571px;text-align:right;font-size:12px;letter-spacing:0.4px;color:#5a5a5a">3.11 KB</div>
<div class="t d" style="left:599px;top:272px;font-size:12px;color:#5a5a5a">txt</div>
<div class="t d" style="left:647px;top:272px;font-size:12px;letter-spacing:0.4px;color:#5a5a5a">2021-03-04 17:55:32</div>
<div class="t d" style="left:781px;top:272px;font-size:12px;letter-spacing:0.35px;color:#5a5a5a">F:\seo\gif文...</div>
<div class="t d" style="left:878px;top:272px;font-size:12px;color:#5a5a5a">存档</div>
<div class="t d" style="left:0;top:272px;width:1012px;text-align:right;font-size:12px;letter-spacing:0.2px;color:#5a5a5a">39BE6000</div>
<div class="ab" style="left:260px;top:302px;width:756px;height:50px;background:#e8f3fd"></div>
<div class="ab" style="left:260px;top:352px;width:756px;height:1px;background:#efefef"></div>
<div class="cb" style="left:268px;top:321px;border-color:#cdcdcd"></div>
<svg class="ab" style="left:295px;top:318px" width="14" height="20" viewBox="0 0 14 20"><path d="M0.5 0.5 H10.5 L13.5 3.5 V19.5 H0.5 Z" fill="#fff" stroke="#777" stroke-width="1"/><rect x="2" y="2" width="7" height="2" fill="#f0f0f0"/><path d="M10.5 0.5 V3.5 H13.5" fill="#f2f2f2" stroke="#999" stroke-width="1"/><path d="M2 6.5 H13 M2 8.5 H13 M2 10.5 H13 M2 12.5 H13 M2 14.5 H13 M2 16.5 H13" stroke="#9a9a9a" stroke-width="1"/></svg>
<div class="t d" style="left:317px;top:322px;font-size:12px;color:#1a1a1a">36.在线免费图片压缩视频转GI...</div>
<div class="t d" style="left:0;top:322px;width:571px;text-align:right;font-size:12px;letter-spacing:0.4px;color:#5a5a5a">1.62 KB</div>
<div class="t d" style="left:599px;top:322px;font-size:12px;color:#5a5a5a">txt</div>
<div class="t d" style="left:647px;top:322px;font-size:12px;letter-spacing:0.4px;color:#5a5a5a">2021-03-04 17:55:32</div>
<div class="t d" style="left:781px;top:322px;font-size:12px;letter-spacing:0.35px;color:#5a5a5a">F:\seo\gif文...</div>
<div class="t d" style="left:878px;top:322px;font-size:12px;color:#5a5a5a">存档</div>
<div class="t d" style="left:0;top:322px;width:1012px;text-align:right;font-size:12px;letter-spacing:0.2px;color:#5a5a5a">39BE5000</div>
<div class="ab" style="left:260px;top:402px;width:756px;height:1px;background:#efefef"></div>
<div class="cb" style="left:268px;top:371px;border-color:#cdcdcd"></div>
<svg class="ab" style="left:295px;top:368px" width="14" height="20" viewBox="0 0 14 20"><path d="M0.5 0.5 H10.5 L13.5 3.5 V19.5 H0.5 Z" fill="#fff" stroke="#777" stroke-width="1"/><rect x="2" y="2" width="7" height="2" fill="#f0f0f0"/><path d="M10.5 0.5 V3.5 H13.5" fill="#f2f2f2" stroke="#999" stroke-width="1"/><path d="M2 6.5 H13 M2 8.5 H13 M2 10.5 H13 M2 12.5 H13 M2 14.5 H13 M2 16.5 H13" stroke="#9a9a9a" stroke-width="1"/></svg>
<div class="t d" style="left:317px;top:372px;font-size:12px;color:#1a1a1a">35.GIF压缩工具更快捷</div>
<div class="t d" style="left:0;top:372px;width:571px;text-align:right;font-size:12px;letter-spacing:0.4px;color:#5a5a5a">2.11 KB</div>
<div class="t d" style="left:599px;top:372px;font-size:12px;color:#5a5a5a">txt</div>
<div class="t d" style="left:647px;top:372px;font-size:12px;letter-spacing:0.4px;color:#5a5a5a">2021-03-04 17:55:32</div>
<div class="t d" style="left:781px;top:372px;font-size:12px;letter-spacing:0.35px;color:#5a5a5a">F:\seo\gif文...</div>
<div class="t d" style="left:878px;top:372px;font-size:12px;color:#5a5a5a">存档</div>
<div class="t d" style="left:0;top:372px;width:1012px;text-align:right;font-size:12px;letter-spacing:0.2px;color:#5a5a5a">39BE4000</div>
<div class="ab" style="left:260px;top:452px;width:756px;height:1px;background:#efefef"></div>
<div class="cb" style="left:268px;top:421px;border-color:#cdcdcd"></div>
<svg class="ab" style="left:295px;top:418px" width="14" height="20" viewBox="0 0 14 20"><path d="M0.5 0.5 H10.5 L13.5 3.5 V19.5 H0.5 Z" fill="#fff" stroke="#777" stroke-width="1"/><rect x="2" y="2" width="7" height="2" fill="#f0f0f0"/><path d="M10.5 0.5 V3.5 H13.5" fill="#f2f2f2" stroke="#999" stroke-width="1"/><path d="M2 6.5 H13 M2 8.5 H13 M2 10.5 H13 M2 12.5 H13 M2 14.5 H13 M2 16.5 H13" stroke="#9a9a9a" stroke-width="1"/></svg>
<div class="t d" style="left:317px;top:422px;font-size:12px;color:#1a1a1a">34.有哪些好用的GIF压缩软件...</div>
<div class="t d" style="left:0;top:422px;width:571px;text-align:right;font-size:12px;letter-spacing:0.4px;color:#5a5a5a">351 B</div>
<div class="t d" style="left:599px;top:422px;font-size:12px;color:#5a5a5a">txt</div>
<div class="t d" style="left:647px;top:422px;font-size:12px;letter-spacing:0.4px;color:#5a5a5a">2021-03-04 17:55:32</div>
<div class="t d" style="left:781px;top:422px;font-size:12px;letter-spacing:0.35px;color:#5a5a5a">F:\seo\gif文...</div>
<div class="t d" style="left:878px;top:422px;font-size:12px;color:#5a5a5a">存档</div>
<div class="t d" style="left:0;top:422px;width:1012px;text-align:right;font-size:12px;letter-spacing:0.2px;color:#5a5a5a">C05A61B0</div>
<div class="ab" style="left:260px;top:502px;width:756px;height:1px;background:#efefef"></div>
<div class="cb" style="left:268px;top:471px;border-color:#cdcdcd"></div>
<svg class="ab" style="left:295px;top:468px" width="14" height="20" viewBox="0 0 14 20"><path d="M0.5 0.5 H10.5 L13.5 3.5 V19.5 H0.5 Z" fill="#fff" stroke="#777" stroke-width="1"/><rect x="2" y="2" width="7" height="2" fill="#f0f0f0"/><path d="M10.5 0.5 V3.5 H13.5" fill="#f2f2f2" stroke="#999" stroke-width="1"/><path d="M2 6.5 H13 M2 8.5 H13 M2 10.5 H13 M2 12.5 H13 M2 14.5 H13 M2 16.5 H13" stroke="#9a9a9a" stroke-width="1"/></svg>
<div class="t d" style="left:317px;top:472px;font-size:12px;color:#1a1a1a">33.如何正确压缩GIF格式文件...</div>
<div class="t d" style="left:0;top:472px;width:571px;text-align:right;font-size:12px;letter-spacing:0.4px;color:#5a5a5a">7.74 KB</div>
<div class="t d" style="left:599px;top:472px;font-size:12px;color:#5a5a5a">txt</div>
<div class="t d" style="left:647px;top:472px;font-size:12px;letter-spacing:0.4px;color:#5a5a5a">2021-03-04 17:55:32</div>
<div class="t d" style="left:781px;top:472px;font-size:12px;letter-spacing:0.35px;color:#5a5a5a">F:\seo\gif文...</div>
<div class="t d" style="left:878px;top:472px;font-size:12px;color:#5a5a5a">存档</div>
<div class="t d" style="left:0;top:472px;width:1012px;text-align:right;font-size:12px;letter-spacing:0.2px;color:#5a5a5a">3774B000</div>
<div class="ab" style="left:260px;top:552px;width:756px;height:1px;background:#efefef"></div>
<div class="cb" style="left:268px;top:521px;border-color:#cdcdcd"></div>
<svg class="ab" style="left:295px;top:518px" width="14" height="20" viewBox="0 0 14 20"><path d="M0.5 0.5 H10.5 L13.5 3.5 V19.5 H0.5 Z" fill="#fff" stroke="#777" stroke-width="1"/><rect x="2" y="2" width="7" height="2" fill="#f0f0f0"/><path d="M10.5 0.5 V3.5 H13.5" fill="#f2f2f2" stroke="#999" stroke-width="1"/><path d="M2 6.5 H13 M2 8.5 H13 M2 10.5 H13 M2 12.5 H13 M2 14.5 H13 M2 16.5 H13" stroke="#9a9a9a" stroke-width="1"/></svg>
<div class="t d" style="left:317px;top:522px;font-size:12px;color:#1a1a1a">32.只需3步快速完成在线GIF...</div>
<div class="t d" style="left:0;top:522px;width:571px;text-align:right;font-size:12px;letter-spacing:0.4px;color:#5a5a5a">1.23 KB</div>
<div class="t d" style="left:599px;top:522px;font-size:12px;color:#5a5a5a">txt</div>
<div class="t d" style="left:647px;top:522px;font-size:12px;letter-spacing:0.4px;color:#5a5a5a">2021-03-04 17:55:32</div>
<div class="t d" style="left:781px;top:522px;font-size:12px;letter-spacing:0.35px;color:#5a5a5a">F:\seo\gif文...</div>
<div class="t d" style="left:878px;top:522px;font-size:12px;color:#5a5a5a">存档</div>
<div class="t d" style="left:0;top:522px;width:1012px;text-align:right;font-size:12px;letter-spacing:0.2px;color:#5a5a5a">3774A000</div>
<div class="ab" style="left:260px;top:602px;width:756px;height:1px;background:#efefef"></div>
<div class="cb" style="left:268px;top:571px;border-color:#cdcdcd"></div>
<svg class="ab" style="left:295px;top:568px" width="14" height="20" viewBox="0 0 14 20"><path d="M0.5 0.5 H10.5 L13.5 3.5 V19.5 H0.5 Z" fill="#fff" stroke="#777" stroke-width="1"/><rect x="2" y="2" width="7" height="2" fill="#f0f0f0"/><path d="M10.5 0.5 V3.5 H13.5" fill="#f2f2f2" stroke="#999" stroke-width="1"/><path d="M2 6.5 H13 M2 8.5 H13 M2 10.5 H13 M2 12.5 H13 M2 14.5 H13 M2 16.5 H13" stroke="#9a9a9a" stroke-width="1"/></svg>
<div class="t d" style="left:317px;top:572px;font-size:12px;color:#1a1a1a">31.Gif图片压缩用什么工具比...</div>
<div class="t d" style="left:0;top:572px;width:571px;text-align:right;font-size:12px;letter-spacing:0.4px;color:#5a5a5a">2.37 KB</div>
<div class="t d" style="left:599px;top:572px;font-size:12px;color:#5a5a5a">txt</div>
<div class="t d" style="left:647px;top:572px;font-size:12px;letter-spacing:0.4px;color:#5a5a5a">2021-03-04 17:55:32</div>
<div class="t d" style="left:781px;top:572px;font-size:12px;letter-spacing:0.35px;color:#5a5a5a">F:\seo\gif文...</div>
<div class="t d" style="left:878px;top:572px;font-size:12px;color:#5a5a5a">存档</div>
<div class="t d" style="left:0;top:572px;width:1012px;text-align:right;font-size:12px;letter-spacing:0.2px;color:#5a5a5a">37749000</div>
<div class="ab" style="left:260px;top:652px;width:756px;height:1px;background:#efefef"></div>
<div class="cb" style="left:268px;top:621px;border-color:#cdcdcd"></div>
<svg class="ab" style="left:295px;top:618px" width="14" height="20" viewBox="0 0 14 20"><path d="M0.5 0.5 H10.5 L13.5 3.5 V19.5 H0.5 Z" fill="#fff" stroke="#777" stroke-width="1"/><rect x="2" y="2" width="7" height="2" fill="#f0f0f0"/><path d="M10.5 0.5 V3.5 H13.5" fill="#f2f2f2" stroke="#999" stroke-width="1"/><path d="M2 6.5 H13 M2 8.5 H13 M2 10.5 H13 M2 12.5 H13 M2 14.5 H13 M2 16.5 H13" stroke="#9a9a9a" stroke-width="1"/></svg>
<div class="t d" style="left:317px;top:622px;font-size:12px;color:#1a1a1a">30.这个免费的GIF压缩工具秒...</div>
<div class="t d" style="left:0;top:622px;width:571px;text-align:right;font-size:12px;letter-spacing:0.4px;color:#5a5a5a">3.65 KB</div>
<div class="t d" style="left:599px;top:622px;font-size:12px;color:#5a5a5a">txt</div>
<div class="t d" style="left:647px;top:622px;font-size:12px;letter-spacing:0.4px;color:#5a5a5a">2021-03-04 17:55:32</div>
<div class="t d" style="left:781px;top:622px;font-size:12px;letter-spacing:0.35px;color:#5a5a5a">F:\seo\gif文...</div>
<div class="t d" style="left:878px;top:622px;font-size:12px;color:#5a5a5a">存档</div>
<div class="t d" style="left:0;top:622px;width:1012px;text-align:right;font-size:12px;letter-spacing:0.2px;color:#5a5a5a">37748000</div>
<div class="ab" style="left:260px;top:702px;width:756px;height:1px;background:#efefef"></div>
<div class="cb" style="left:268px;top:671px;border-color:#cdcdcd"></div>
<svg class="ab" style="left:295px;top:668px" width="14" height="20" viewBox="0 0 14 20"><path d="M0.5 0.5 H10.5 L13.5 3.5 V19.5 H0.5 Z" fill="#fff" stroke="#777" stroke-width="1"/><rect x="2" y="2" width="7" height="2" fill="#f0f0f0"/><path d="M10.5 0.5 V3.5 H13.5" fill="#f2f2f2" stroke="#999" stroke-width="1"/><path d="M2 6.5 H13 M2 8.5 H13 M2 10.5 H13 M2 12.5 H13 M2 14.5 H13 M2 16.5 H13" stroke="#9a9a9a" stroke-width="1"/></svg>
<div class="t d" style="left:317px;top:672px;font-size:12px;color:#1a1a1a">3.送你四个GIF免费压缩工具帮...</div>
<div class="t d" style="left:0;top:672px;width:571px;text-align:right;font-size:12px;letter-spacing:0.4px;color:#5a5a5a">1.11 KB</div>
<div class="t d" style="left:599px;top:672px;font-size:12px;color:#5a5a5a">txt</div>
<div class="t d" style="left:647px;top:672px;font-size:12px;letter-spacing:0.4px;color:#5a5a5a">2021-03-04 17:55:32</div>
<div class="t d" style="left:781px;top:672px;font-size:12px;letter-spacing:0.35px;color:#5a5a5a">F:\seo\gif文...</div>
<div class="t d" style="left:878px;top:672px;font-size:12px;color:#5a5a5a">存档</div>
<div class="t d" style="left:0;top:672px;width:1012px;text-align:right;font-size:12px;letter-spacing:0.2px;color:#5a5a5a">37747000</div>
<div class="ab" style="left:260px;top:752px;width:756px;height:1px;background:#efefef"></div>
<div class="cb" style="left:268px;top:721px;border-color:#cdcdcd"></div>
<svg class="ab" style="left:295px;top:718px" width="14" height="20" viewBox="0 0 14 20"><path d="M0.5 0.5 H10.5 L13.5 3.5 V19.5 H0.5 Z" fill="#fff" stroke="#777" stroke-width="1"/><rect x="2" y="2" width="7" height="2" fill="#f0f0f0"/><path d="M10.5 0.5 V3.5 H13.5" fill="#f2f2f2" stroke="#999" stroke-width="1"/><path d="M2 6.5 H13 M2 8.5 H13 M2 10.5 H13 M2 12.5 H13 M2 14.5 H13 M2 16.5 H13" stroke="#9a9a9a" stroke-width="1"/></svg>
<div class="t d" style="left:317px;top:722px;font-size:12px;color:#1a1a1a">29.</div>
<div class="t d" style="left:0;top:722px;width:571px;text-align:right;font-size:12px;letter-spacing:0.4px;color:#5a5a5a">1.00 KB</div>
<div class="t d" style="left:599px;top:722px;font-size:12px;color:#5a5a5a">txt</div>
<div class="t d" style="left:647px;top:722px;font-size:12px;letter-spacing:0.4px;color:#5a5a5a">2021-03-04 17:55:32</div>
<div class="t d" style="left:781px;top:722px;font-size:12px;letter-spacing:0.35px;color:#5a5a5a">F:\seo\gif文...</div>
<div class="t d" style="left:878px;top:722px;font-size:12px;color:#5a5a5a">存档</div>
<div class="t d" style="left:0;top:722px;width:1012px;text-align:right;font-size:12px;letter-spacing:0.2px;color:#5a5a5a">37746000</div>
<div class="ab" style="left:440px;top:369px;width:61px;height:22px;border-radius:2px;background:rgba(0,0,0,0.32);filter:blur(1px)"></div>
<div class="ab" style="left:437px;top:366px;width:61px;height:22px;border-radius:2px;border:1px solid #767676;background:linear-gradient(#ffffff,#e4e5f0)"></div>
<div class="t" style="left:443px;top:371px;font-size:12px;color:#575757">双击预览</div>
<div class="ab" style="left:0;top:700px;width:1024px;height:8px;background:linear-gradient(rgba(255,255,255,0),#c6d3e1)"></div>
<div class="ab" style="left:0;top:708px;width:1024px;height:60px;background:linear-gradient(#3c9dfc 0,#2b8ff3 22%,#2488ef 60%,#1479e1 100%)"></div>
<div class="t" style="left:16px;top:732px;font-size:12px;font-weight:bold;color:#fff">找不到需要的数据？需要</div>
<div class="ab" style="left:153px;top:724px;width:70px;height:26px;border-radius:13px;background:#dcecfc;overflow:hidden"><div class="ab" style="left:-15px;top:12px;width:100px;height:40px;border-radius:50%;background:#c8e0f9"></div></div>
<div class="t d" style="left:164px;top:731px;font-size:12px;color:#2f8aee">深度模式</div>
<div class="t" style="left:698px;top:733px;font-size:12px;color:#dbe9fa">您选择了</div>
<div class="t" style="left:750px;top:730px;font-size:15px;font-weight:bold;color:#fff">1</div>
<div class="t" style="left:763px;top:733px;font-size:12px;color:#dbe9fa">个文件</div>
<div class="t" style="left:796px;top:733px;font-size:12px;color:#dbe9fa">（</div>
<div class="t" style="left:816px;top:730px;font-size:15px;font-weight:bold;color:#fff">11.00 KB</div>
<div class="t" style="left:885px;top:733px;font-size:12px;color:#dbe9fa">）</div>
<div class="ab" style="left:903px;top:719px;width:100px;height:36px;border-radius:18px;background:#d6e9fc;overflow:hidden;box-shadow:0 1px 2px rgba(0,0,0,0.15)"><div class="ab" style="left:-20px;top:17px;width:140px;height:50px;border-radius:50%;background:#c3defa"></div></div>
<div class="t d" style="left:941px;top:732px;font-size:12px;color:#2f8aee">恢复</div>
</body></html>
